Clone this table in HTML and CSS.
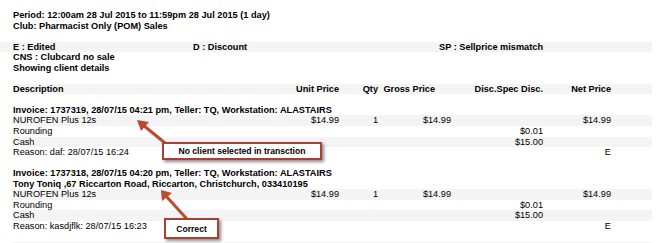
FILE: index.html
```html
<!DOCTYPE html>
<html>
<head>
<meta charset="utf-8">
<link rel="stylesheet" href="styles.css">
</head>
<body>
<div class="page">
  <div class="meta">
    <div class="row b">Period: 12:00am 28 Jul 2015 to 11:59pm 28 Jul 2015 (1 day)</div>
    <div class="row b">Club: Pharmacist Only (POM) Sales</div>
    <div class="row"></div>
  </div>
  <div class="legend">
    <div class="row lg band b"><span>E : Edited</span><span>D : Discount</span><span>SP : Sellprice mismatch</span></div>
    <div class="row lg b"><span>CNS : Clubcard no sale</span></div>
    <div class="row lg b"><span>Showing client details</span></div>
    <div class="row"></div>
  </div>
  <div class="table">
    <div class="row tr band b">
      <span class="desc">Description</span><span class="num">Unit Price</span><span class="num">Qty</span><span class="num gh">Gross Price</span><span class="num">Disc.Spec Disc.</span><span class="num">Net Price</span>
    </div>
    <div class="row"></div>
    <div class="row tr b"><span class="full">Invoice: 1737319, 28/07/15 04:21 pm, Teller: TQ, Workstation: ALASTAIRS</span></div>
    <div class="row tr band"><span class="desc">NUROFEN Plus 12s</span><span class="num">$14.99</span><span class="num">1</span><span class="num">$14.99</span><span class="num"></span><span class="num">$14.99</span></div>
    <div class="row tr"><span class="desc">Rounding</span><span class="num"></span><span class="num"></span><span class="num"></span><span class="num">$0.01</span><span class="num"></span></div>
    <div class="row tr band"><span class="desc">Cash</span><span class="num"></span><span class="num"></span><span class="num"></span><span class="num">$15.00</span><span class="num"></span></div>
    <div class="row tr"><span class="desc">Reason: daf: 28/07/15 16:24</span><span class="num"></span><span class="num"></span><span class="num"></span><span class="num"></span><span class="num">E</span></div>
    <div class="row"></div>
    <div class="row tr b"><span class="full">Invoice: 1737318, 28/07/15 04:20 pm, Teller: TQ, Workstation: ALASTAIRS</span></div>
    <div class="row tr b"><span class="full">Tony Toniq ,67 Riccarton Road, Riccarton, Christchurch, 033410195</span></div>
    <div class="row tr band"><span class="desc">NUROFEN Plus 12s</span><span class="num">$14.99</span><span class="num">1</span><span class="num">$14.99</span><span class="num"></span><span class="num">$14.99</span></div>
    <div class="row tr"><span class="desc">Rounding</span><span class="num"></span><span class="num"></span><span class="num"></span><span class="num">$0.01</span><span class="num"></span></div>
    <div class="row tr band"><span class="desc">Cash</span><span class="num"></span><span class="num"></span><span class="num"></span><span class="num">$15.00</span><span class="num"></span></div>
    <div class="row tr"><span class="desc">Reason: kasdjflk: 28/07/15 16:23</span><span class="num"></span><span class="num"></span><span class="num"></span><span class="num"></span><span class="num">E</span></div>
    <div class="row"></div>
    <div class="row tr band"></div>
  </div>

  <svg class="arrows" width="665" height="243" viewBox="0 0 665 243">
    <g stroke="#bb4a2f" stroke-width="3" stroke-linecap="round" fill="none">
      <line x1="165" y1="143" x2="143" y2="125"/>
      <line x1="186" y1="218" x2="166" y2="196"/>
    </g>
    <g fill="#bb4a2f">
      <polygon points="137,120 149,122 141,131"/>
      <polygon points="161,190 172,193 162,201"/>
    </g>
  </svg>
  <div class="callout c1">No client selected in transction</div>
  <div class="callout c2">Correct</div>
</div>
</body>
</html>
```
FILE: styles.css
```css
html, body {
  margin: 0;
  padding: 0;
  background: #fff;
}
.page {
  position: relative;
  width: 665px;
  height: 243px;
  overflow: hidden;
  padding-top: 10px;
  box-sizing: border-box;
  font-family: "Liberation Sans", Arial, sans-serif;
  font-size: 9.2px;
  color: #000;
}
.row {
  height: 10.55px;
  line-height: 10.55px;
  white-space: nowrap;
}
.b {
  font-weight: bold;
}
.meta {
  padding-left: 13px;
}
.legend .lg {
  display: grid;
  grid-template-columns: 180px 246px auto;
  padding-left: 13px;
  width: 639px;
}
.band {
  background: #f4f4f4;
}
.table {
  margin-left: 12px;
  width: 640px;
}
.tr {
  display: grid;
  grid-template-columns: 277px 49px 39px 73px 92px 68px;
  padding-left: 1px;
}
.num {
  text-align: right;
}
.gh {
  padding-right: 16px;
}
.full {
  grid-column: 1 / -1;
}
.arrows {
  position: absolute;
  left: 0;
  top: 0;
}
.callout {
  position: absolute;
  box-sizing: border-box;
  background: #fff;
  border: 2px solid #a94034;
  box-shadow: 2px 2px 3px rgba(0,0,0,0.45);
  font-weight: bold;
  font-size: 8.6px;
  color: #000;
  display: flex;
  align-items: center;
  justify-content: center;
}
.c1 {
  left: 162px;
  top: 142px;
  width: 160px;
  height: 18px;
}
.c2 {
  left: 164px;
  top: 218px;
  width: 55px;
  height: 21px;
}
```
